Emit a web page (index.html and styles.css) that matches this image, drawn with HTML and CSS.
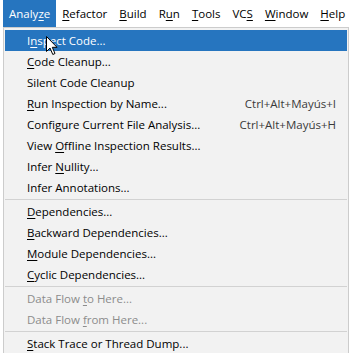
FILE: index.html
```html
<!DOCTYPE html>
<html lang="en">
<head>
    <meta charset="UTF-8">
    <title>Analyze menu</title>
    <link rel="stylesheet" href="styles.css">
</head>
<body>
    <!-- Main menu bar -->
    <nav class="menubar">
        <span class="top active">Analy<u>z</u>e</span>
        <span class="top"><u>R</u>efactor</span>
        <span class="top"><u>B</u>uild</span>
        <span class="top">R<u>u</u>n</span>
        <span class="top"><u>T</u>ools</span>
        <span class="top">VC<u>S</u></span>
        <span class="top"><u>W</u>indow</span>
        <span class="top"><u>H</u>elp</span>
    </nav>

    <!-- Dropdown for Analyze -->
    <div class="popup">
        <div class="item selected"><span>I<u>n</u>spect Code...</span></div>
        <div class="item"><span><u>C</u>ode Cleanup...</span></div>
        <div class="item"><span>Silent Code Cleanup</span></div>
        <div class="item"><span><u>R</u>un Inspection by Name...</span><span class="key">Ctrl+Alt+Mayús+I</span></div>
        <div class="item"><span>Configure Current File Analysis...</span><span class="key">Ctrl+Alt+Mayús+H</span></div>
        <div class="item"><span>View <u>O</u>ffline Inspection Results...</span></div>
        <div class="item"><span>Infer <u>N</u>ullity...</span></div>
        <div class="item"><span>Infer Annotations...</span></div>
        <div class="sep"></div>
        <div class="item"><span><u>D</u>ependencies...</span></div>
        <div class="item"><span><u>B</u>ackward Dependencies...</span></div>
        <div class="item"><span><u>M</u>odule Dependencies...</span></div>
        <div class="item"><span><u>C</u>yclic Dependencies...</span></div>
        <div class="sep"></div>
        <div class="item disabled"><span>Data Flow <u>t</u>o Here...</span></div>
        <div class="item disabled"><span>Data Flow <u>f</u>rom Here...</span></div>
        <div class="sep"></div>
        <div class="item"><span><u>S</u>tack Trace or Thread Dump...</span></div>
    </div>

    <!-- mouse pointer -->
    <svg class="cursor" width="13" height="20" viewBox="0 0 13 20">
        <path d="M0.5 0.5 L0.5 15.5 L4 12 L6.8 18.5 L9 17.5 L6.3 11.3 L11 11.3 Z" fill="#fff" stroke="#000" stroke-width="1"/>
    </svg>
</body>
</html>
```

FILE: styles.css
```css
* {
  margin: 0;
  padding: 0;
  box-sizing: border-box;
}

body {
  font-family: "Open Sans", "Noto Sans", sans-serif;
  font-size: 11.5px;
  color: #000;
  background-color: #fff;
  width: 353px;
  height: 353px;
  overflow: hidden;
  position: relative;
}

u {
  text-decoration: underline;
  text-underline-offset: 2px;
}

.menubar {
  display: flex;
  height: 27px;
  padding-left: 3px;
  background-color: #fff;
}

.top {
  display: flex;
  align-items: center;
  padding: 0 6px 0 6px;
}

.top.active {
  background-color: #2675bf;
  color: #fff;
}

.popup {
  margin-left: 3px;
  width: 346px;
  background-color: #f2f2f2;
  border: 1px solid #cccccc;
  padding: 2px 1px 0 1px;
}

.item {
  display: flex;
  justify-content: space-between;
  align-items: center;
  height: 21px;
  padding: 0 11px 0 22px;
}

.item.selected {
  background-color: #2675bf;
  color: #fff;
}

.item.disabled {
  color: #8c8c8c;
}

.key {
  color: #3a3a3a;
}

.sep {
  height: 1px;
  margin: 1px 0 1px 0;
  background-color: #d2d2d2;
}

.cursor {
  position: absolute;
  left: 46px;
  top: 36px;
}
```
